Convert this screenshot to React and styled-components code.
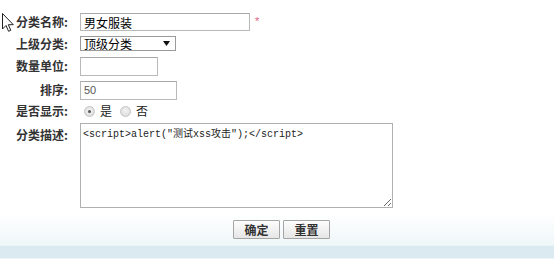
import React from "react";
import styled, { createGlobalStyle } from "styled-components";

const Global = createGlobalStyle`
  html, body { margin: 0; padding: 0; background: #fff; }
  body { width: 554px; height: 259px; overflow: hidden; font-family: "Liberation Sans", "Noto Sans CJK SC", sans-serif; }
`;

const Page = styled.div`
  position: relative;
  width: 554px;
  height: 259px;
  display: flex;
  flex-direction: column;
`;

const Form = styled.div`
  display: grid;
  grid-template-columns: 68px 1fr;
  grid-template-rows: 18px 15px 20px 18px 14px 86px;
  column-gap: 12px;
  row-gap: 5px;
  padding-top: 13px;
`;

const Label = styled.label`
  font-family: "Noto Sans CJK SC", sans-serif;
  font-size: 12px;
  font-weight: 700;
  color: #333;
  line-height: 14px;
  text-align: right;
  align-self: ${(p) => (p.$top ? "start" : "center")};
  padding-top: ${(p) => (p.$top ? "5px" : "0")};
  white-space: nowrap;
`;

const Cell = styled.div`
  display: flex;
  align-items: center;
  gap: 5px;
`;

const TextInput = styled.input`
  box-sizing: border-box;
  width: ${(p) => p.$w}px;
  height: ${(p) => p.$h || 19}px;
  margin: 0;
  border: 1px solid #b9b9b9;
  border-top-color: #a8a8a8;
  padding: 0 3px;
  font-family: ${(p) => (p.$small ? '"Liberation Sans", sans-serif' : '"Noto Sans CJK SC", sans-serif')};
  font-size: ${(p) => (p.$small ? 11 : 12)}px;
  color: ${(p) => (p.$small ? "#555" : "#000")};
  outline: none;
  background: #fff;
`;

const Required = styled.span`
  color: #e0607e;
  font-size: 11px;
  font-family: "Liberation Sans", sans-serif;
  line-height: 1;
  margin-top: -2px;
`;

const Select = styled.div`
  box-sizing: border-box;
  width: 96px;
  height: 15px;
  border: 1px solid #9a9a9a;
  display: flex;
  align-items: center;
  justify-content: space-between;
  padding: 0 5px 0 3px;
  background: #fff;
  font-family: "Noto Sans CJK SC", sans-serif;
  font-size: 12px;
  color: #000;
  line-height: 13px;
`;

const RadioGroup = styled.div`
  display: flex;
  align-items: center;
  padding-left: 4px;
  font-family: "Noto Sans CJK SC", sans-serif;
  font-size: 12px;
  color: #222;
`;

const Radio = styled.span`
  box-sizing: border-box;
  width: 11px;
  height: 11px;
  border-radius: 50%;
  border: 1px solid #c4c4c4;
  background: radial-gradient(circle at 50% 40%, #f4f4f4, #d6d6d6);
  display: flex;
  align-items: center;
  justify-content: center;
  margin-right: 5px;
  &::after {
    content: "";
    width: 3px;
    height: 3px;
    border-radius: 50%;
    background: ${(p) => (p.$checked ? "#555" : "transparent")};
  }
`;

const RadioText = styled.span`
  margin-right: 8px;
  line-height: 14px;
`;

const TextArea = styled.textarea`
  box-sizing: border-box;
  width: 313px;
  height: 85px;
  margin: 0;
  border: 1px solid #b0b0b0;
  padding: 4px 2px;
  font-family: "Liberation Mono", "Noto Sans CJK SC", monospace;
  font-size: 10px;
  line-height: 13px;
  color: #222;
  outline: none;
  align-self: start;
`;

const Footer = styled.div`
  margin-top: 5px;
  height: 31px;
  display: flex;
  align-items: center;
  padding-left: 233px;
  gap: 3px;
  background: linear-gradient(#ffffff, #eff7f9);
`;

const Button = styled.button`
  box-sizing: border-box;
  width: 47px;
  height: 19px;
  margin: 0;
  padding: 0;
  border: 1px solid #a5a5a5;
  border-radius: 1px;
  background: linear-gradient(#fdfdfd, #e6e6e6);
  font-family: "Noto Sans CJK SC", sans-serif;
  font-size: 12px;
  font-weight: 700;
  color: #333;
  line-height: 16px;
`;

const Bar = styled.div`
  flex: 1;
  border-top: 1px solid #e9f4f7;
  background: #dbeaf0;
  border-bottom: 1px solid #eef6f8;
`;

const Cursor = styled.svg`
  position: absolute;
  left: 2px;
  top: 13px;
`;

export default function App() {
  return (
    <Page>
      <Global />
      <Form>
        <Label>分类名称:</Label>
        <Cell>
          <TextInput $w={170} $h={18} defaultValue="男女服装" />
          <Required>*</Required>
        </Cell>

        <Label>上级分类:</Label>
        <Cell>
          <Select>
            <span>顶级分类</span>
            <svg width="7" height="5" viewBox="0 0 7 5">
              <path d="M0 0 H7 L3.5 5 Z" fill="#111" />
            </svg>
          </Select>
        </Cell>

        <Label>数量单位:</Label>
        <Cell>
          <TextInput $w={78} $h={19} />
        </Cell>

        <Label>排序:</Label>
        <Cell>
          <TextInput $w={97} $h={19} $small defaultValue="50" />
        </Cell>

        <Label>是否显示:</Label>
        <RadioGroup>
          <Radio $checked />
          <RadioText>是</RadioText>
          <Radio />
          <RadioText>否</RadioText>
        </RadioGroup>

        <Label $top>分类描述:</Label>
        <Cell>
          <TextArea defaultValue={'<script>alert("测试xss攻击");</script>'} />
        </Cell>
      </Form>
      <Footer>
        <Button>确定</Button>
        <Button>重置</Button>
      </Footer>
      <Bar />
      <Cursor width="13" height="19" viewBox="0 0 13 19">
        <path d="M0.5 0.5 V16 L4 12.5 L6.6 18.3 L8.8 17.3 L6.3 11.7 H11.3 Z" fill="#fff" stroke="#222" strokeWidth="1" strokeLinejoin="round" />
      </Cursor>
    </Page>
  );
}
